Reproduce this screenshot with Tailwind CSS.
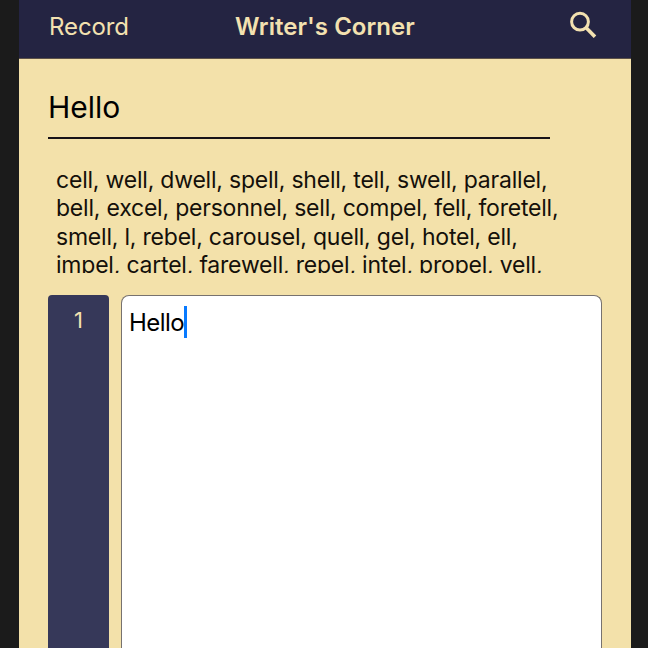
<!DOCTYPE html>
<html lang="en">
<head>
<meta charset="utf-8">
<title>Writer's Corner</title>
<script src="https://cdn.jsdelivr.net/npm/@tailwindcss/browser@4"></script>
</head>
<body class="h-[648px] w-[648px] overflow-hidden bg-[#1b1b1b] font-[Inter,'Liberation_Sans',sans-serif] text-[#14100a]">
<div class="mx-auto flex h-full w-[612px] translate-x-px flex-col bg-[#f3e1aa]">
  <header class="grid h-[59px] shrink-0 grid-cols-3 border-b border-[#5c5148] bg-[#242442] pl-[30px] pr-[30px] pt-[11px] leading-8 text-[#f3e1b0]">
    <button class="h-8 text-left text-[24px] tracking-[-0.1px]">Record</button>
    <h1 class="h-8 whitespace-nowrap text-center text-[24px] font-semibold tracking-[0.05px]">Writer's Corner</h1>
    <button class="-mt-px ml-auto mr-1 h-7" aria-label="Search">
      <svg class="block h-[28px] w-[28px]" viewBox="0 0 28 28" fill="none" stroke="currentColor"><circle cx="11" cy="11.7" r="8.4" stroke-width="3"/><path d="M17.4 18.1 26 26.8" stroke-width="3.6"/></svg>
    </button>
  </header>
  <main class="flex min-h-0 flex-1 flex-col pl-[29px] pr-[29px]">
    <div class="h-[80px] w-[502px] shrink-0 border-b-2 border-[#171217] pt-[28px] text-[30px] leading-10 text-black">Hello</div>
    <div class="mt-[27px] h-[107px] shrink-0 overflow-hidden pl-2 text-[23px] leading-[28.3px] tracking-[-0.21px]">
      <p class="whitespace-nowrap">cell, well, dwell, spell, shell, tell, swell, parallel,<br>bell, excel, personnel, sell, compel, fell, foretell,<br>smell, l, rebel, carousel, quell, gel, hotel, ell,<br>impel, cartel, farewell, repel, intel, propel, yell,</p>
    </div>
    <div class="mt-[22px] flex flex-1 gap-3">
      <div class="w-[61px] rounded-t-[4px] bg-[#363859] pt-[9px] text-center text-[22px] leading-8 text-[#f3e1b0]">1</div>
      <div class="flex w-[481px] items-start rounded-t-[8px] border border-b-0 border-[#77726f] bg-white pl-[7px] pt-[11px] text-[24px] leading-8 tracking-[-0.55px] text-black"><span>Hello</span><span class="-mt-px h-8 w-[3px] bg-[#087aff]"></span></div>
    </div>
  </main>
</div>
</body>
</html>
